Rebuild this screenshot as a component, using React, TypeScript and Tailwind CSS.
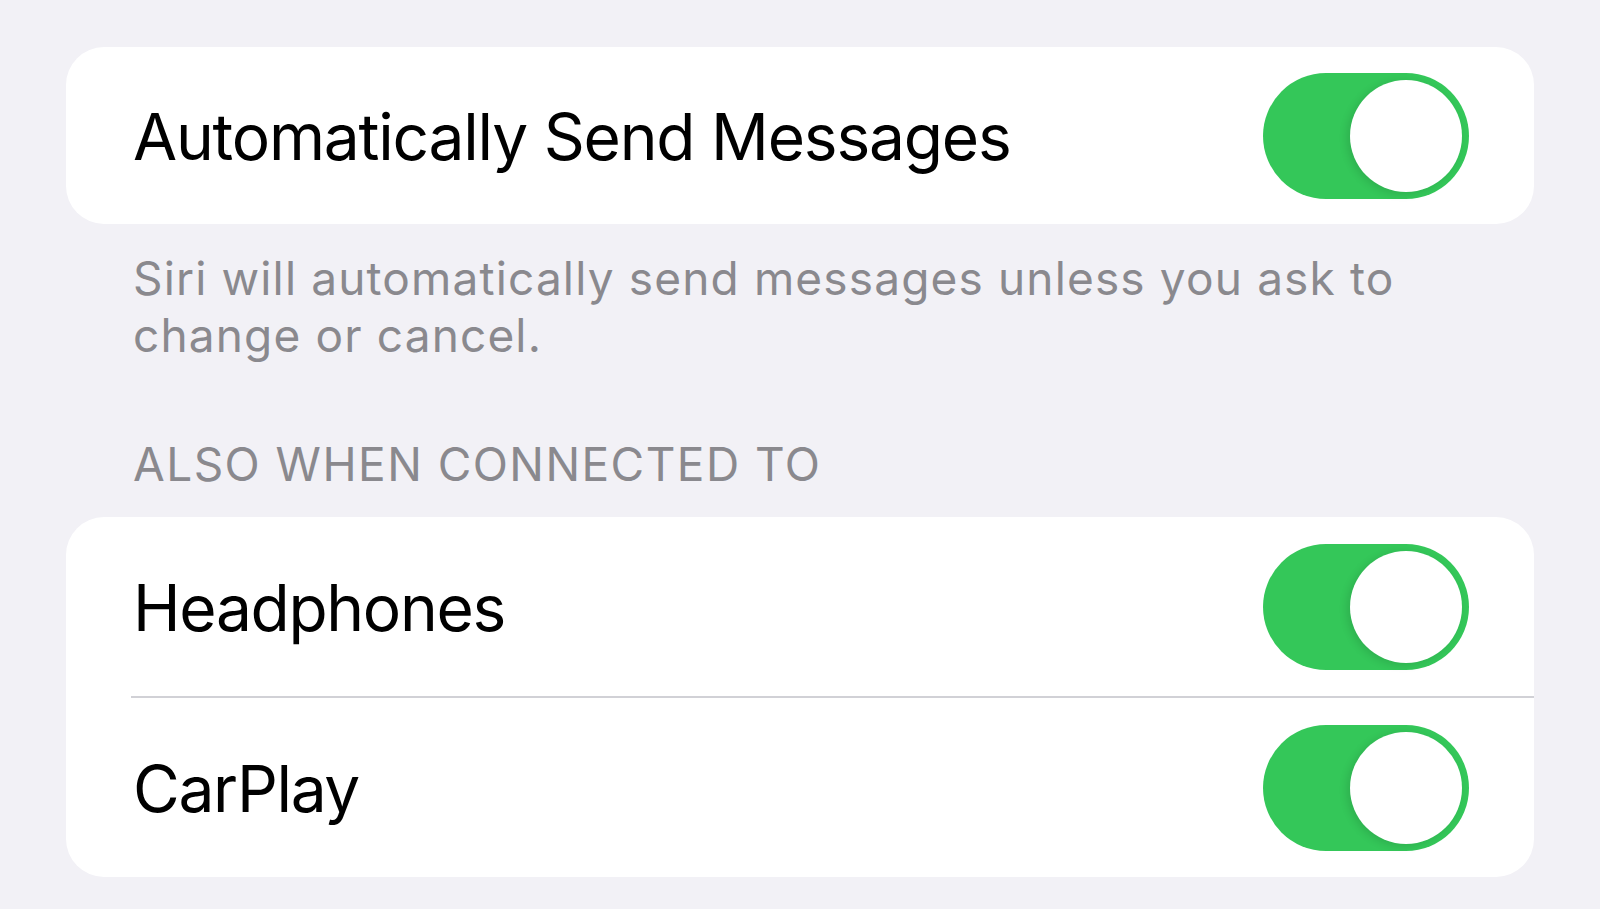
import React from "react";

const font = { fontFamily: "Inter, 'Noto Sans', 'Liberation Sans', sans-serif" };

function Toggle() {
  return (
    <div className="relative flex h-[126px] w-[206px] shrink-0 items-center justify-end rounded-full bg-[#34c759] pr-[7px]">
      <div className="h-[112px] w-[112px] rounded-full bg-white shadow-[-3px_2px_8px_rgba(0,0,0,0.12)]" />
    </div>
  );
}

function Row({ label, divider }: { label: string; divider?: boolean }) {
  return (
    <div className="flex flex-col">
      <div className="flex h-[179px] items-center justify-between pl-[67px] pr-[65px]">
        <span className="pt-[3px] text-[64px] leading-none tracking-[-1.3px] text-black">{label}</span>
        <Toggle />
      </div>
      {divider && <div className="ml-[65px] h-[2px] bg-[#d1d1d6]" />}
    </div>
  );
}

export default function App() {
  return (
    <div className="h-[909px] w-full overflow-hidden bg-[#f2f1f6] px-[66px] pt-[47px]" style={font}>
      <div className="flex h-[177px] items-center justify-between rounded-[38px] bg-white pl-[67px] pr-[65px]">
        <span className="pt-[3px] text-[64px] leading-none tracking-[-1.2px] text-black">Automatically Send Messages</span>
        <Toggle />
      </div>

      <p className="mt-[26px] w-[1400px] pl-[67px] text-[46px] leading-[57px] tracking-[1.15px] text-[#8a898e]">
        Siri will automatically send messages unless you ask to change or cancel.
      </p>

      <div className="mt-[72px] pl-[67px] text-[46px] uppercase leading-[57px] tracking-[1.45px] text-[#8a898e]">
        Also when connected to
      </div>

      <div className="mt-[24px] overflow-hidden rounded-[38px] bg-white">
        <Row label="Headphones" divider />
        <Row label="CarPlay" />
      </div>
    </div>
  );
}
